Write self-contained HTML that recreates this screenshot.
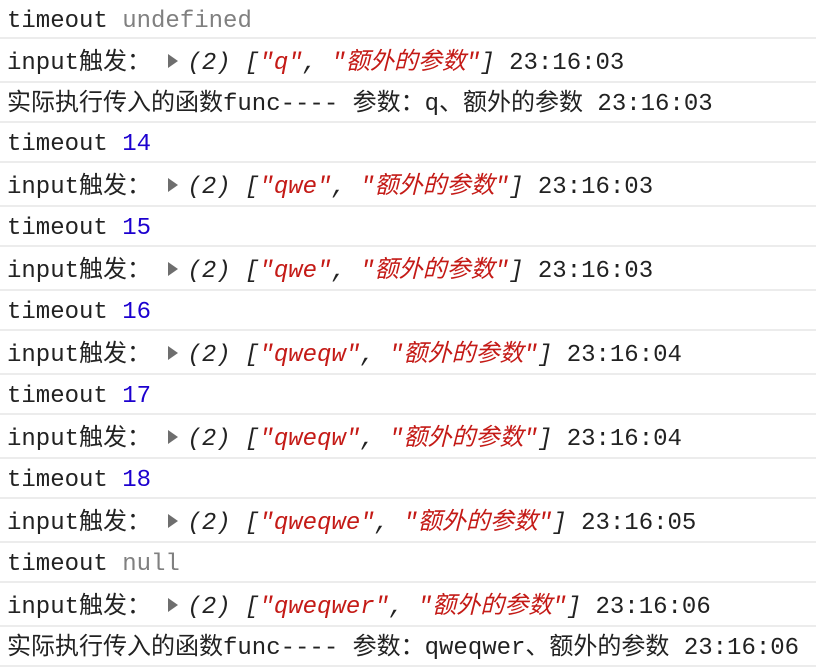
<!DOCTYPE html><html><head><meta charset="utf-8"><style>
body{margin:0;background:#fff;width:816px;height:672px;overflow:hidden;font-family:"Liberation Mono","Noto Sans CJK SC",monospace;font-size:24px;color:#222}
.r{box-sizing:border-box;border-bottom:2px solid #ececec;padding-left:7px;white-space:pre;overflow:hidden}
.t{height:40px;line-height:38px;padding-top:3px}.i{height:44px;line-height:42px;padding-top:4px}
.g{color:#808080}.b{color:#1c00cf}.s{color:#c41a16;font-style:italic}.it{font-style:italic}
.tri{display:inline-block;vertical-align:middle;width:0;height:0;border-left:10px solid #6e6e6e;border-top:7px solid transparent;border-bottom:7px solid transparent;margin:0 9px 4px 3px}
</style></head><body>
<div class="r t" style="height:39px;line-height:37px">timeout <span class="g">undefined</span></div>
<div class="r i">input触发： <span class="tri"></span><span class="it">(2) [<span class="s">"q"</span>, <span class="s">"额外的参数"</span>]</span> 23:16:03</div>
<div class="r t">实际执行传入的函数func---- 参数：q、额外的参数 23:16:03</div>
<div class="r t">timeout <span class="b">14</span></div>
<div class="r i">input触发： <span class="tri"></span><span class="it">(2) [<span class="s">"qwe"</span>, <span class="s">"额外的参数"</span>]</span> 23:16:03</div>
<div class="r t">timeout <span class="b">15</span></div>
<div class="r i">input触发： <span class="tri"></span><span class="it">(2) [<span class="s">"qwe"</span>, <span class="s">"额外的参数"</span>]</span> 23:16:03</div>
<div class="r t">timeout <span class="b">16</span></div>
<div class="r i">input触发： <span class="tri"></span><span class="it">(2) [<span class="s">"qweqw"</span>, <span class="s">"额外的参数"</span>]</span> 23:16:04</div>
<div class="r t">timeout <span class="b">17</span></div>
<div class="r i">input触发： <span class="tri"></span><span class="it">(2) [<span class="s">"qweqw"</span>, <span class="s">"额外的参数"</span>]</span> 23:16:04</div>
<div class="r t">timeout <span class="b">18</span></div>
<div class="r i">input触发： <span class="tri"></span><span class="it">(2) [<span class="s">"qweqwe"</span>, <span class="s">"额外的参数"</span>]</span> 23:16:05</div>
<div class="r t">timeout <span class="g">null</span></div>
<div class="r i">input触发： <span class="tri"></span><span class="it">(2) [<span class="s">"qweqwer"</span>, <span class="s">"额外的参数"</span>]</span> 23:16:06</div>
<div class="r t">实际执行传入的函数func---- 参数：qweqwer、额外的参数 23:16:06</div>
</body></html>
